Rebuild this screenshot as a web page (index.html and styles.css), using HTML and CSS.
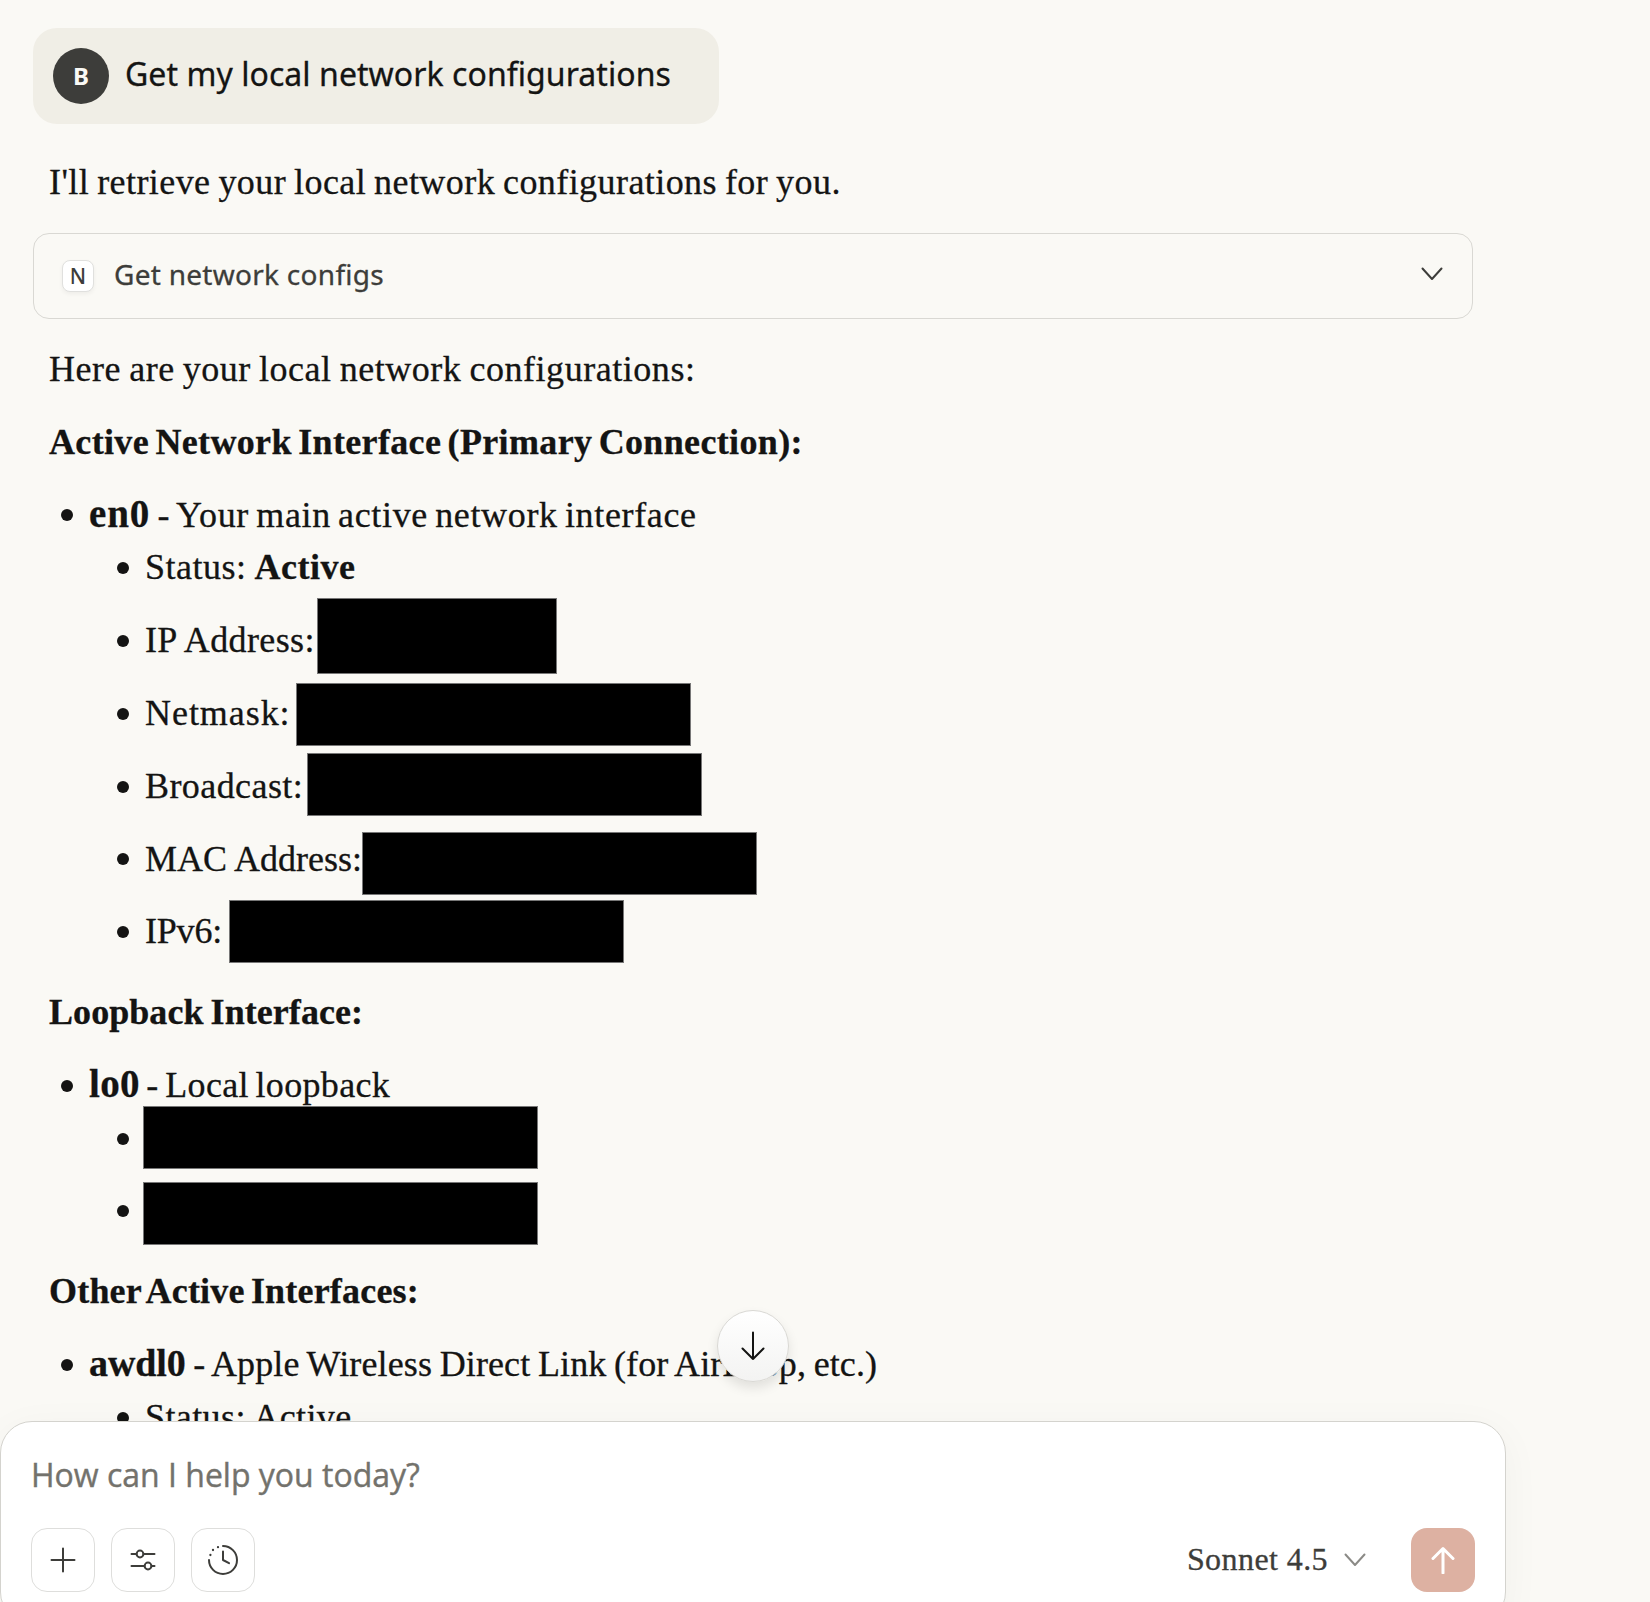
FILE: index.html
```html
<!DOCTYPE html>
<html lang="en">
<head>
<meta charset="utf-8">
<title>Local network configurations</title>
<link rel="stylesheet" href="styles.css">
</head>
<body>
<main class="chat">
  <div class="prompt">
    <span class="avatar">B</span>
    <span class="prompt-text">Get my local network configurations</span>
  </div>
  <p class="line intro"><span class="t-intro">I'll retrieve your local network configurations for you.</span></p>
  <div class="tool">
    <span class="tool-badge"><span>N</span></span>
    <span class="tool-name">Get network configs</span>
    <svg class="tool-chevron" width="22" height="14" viewBox="0 0 22 14"><path d="M1.500 1.500 11 12l9.500-10.500"/></svg>
  </div>
  <div class="answer">
    <p class="line"><span class="t-here">Here are your local network configurations:</span></p>
    <h3 class="line"><span class="t-active">Active Network Interface (Primary Connection):</span></h3>
    <ul class="list">
      <li class="item"><b class="t-en">en0</b><span class="t-main"> - Your main active network interface</span>
        <ul class="sublist">
          <li class="item"><span class="t-status">Status: </span><b class="t-on">Active</b></li>
          <li class="item"><span class="t-ip">IP Address:</span><i class="redact r-ip"></i></li>
          <li class="item"><span class="t-mask">Netmask:</span><i class="redact r-mask"></i></li>
          <li class="item"><span class="t-cast">Broadcast:</span><i class="redact r-cast"></i></li>
          <li class="item"><span class="t-mac">MAC Address:</span><i class="redact r-mac"></i></li>
          <li class="item"><span class="t-six">IPv6:</span><i class="redact r-six"></i></li>
        </ul>
      </li>
    </ul>
    <h3 class="line"><span class="t-loop">Loopback Interface:</span></h3>
    <ul class="list">
      <li class="item"><b class="t-lo">lo0</b><span class="t-local"> - Local loopback</span>
        <ul class="sublist">
          <li class="item">&nbsp;<i class="redact r-lo1"></i></li>
          <li class="item">&nbsp;<i class="redact r-lo2"></i></li>
        </ul>
      </li>
    </ul>
    <h3 class="line"><span class="t-other">Other Active Interfaces:</span></h3>
    <ul class="list">
      <li class="item"><b class="t-awdl">awdl0</b><span class="t-apple"> - Apple Wireless Direct Link (for AirDrop, etc.)</span>
        <ul class="sublist">
          <li class="item"><span class="t-status2">Status: Active</span></li>
        </ul>
      </li>
    </ul>
  </div>
</main>
<button class="scroll-down" aria-label="Scroll to bottom">
  <svg width="24" height="30" viewBox="0 0 24 30"><path d="M12 1.500V28M1.500 17.500 12 28l10.500-10.500"/></svg>
</button>
<section class="composer">
  <div class="placeholder">How can I help you today?</div>
  <div class="toolbar">
    <button class="icon-btn" aria-label="Add"><svg width="32" height="32" viewBox="0 0 32 32"><path d="M16 4.500v23M4.500 16h23"/></svg></button>
    <button class="icon-btn" aria-label="Settings"><svg width="32" height="32" viewBox="0 0 32 32"><path d="M4.500 10H9.500M16.500 10H27.500M4.500 22H17.500M24.500 22H27.500"/><circle cx="13" cy="10" r="3.400"/><circle cx="21" cy="22" r="3.400"/></svg></button>
    <button class="icon-btn" aria-label="History"><svg width="32" height="32" viewBox="0 0 32 32"><path d="M16 2A14 14 0 1 1 2 16"/><path d="M16 7.500V16l6 3.200"/><g class="dots"><circle cx="3.400" cy="11" r="1.150"/><circle cx="6" cy="6" r="1.150"/><circle cx="11" cy="3.200" r="1.150"/></g></svg></button>
    <span class="model">Sonnet 4.5</span>
    <svg class="model-chevron" width="22" height="14" viewBox="0 0 22 14"><path d="M1.500 1.500 11 12l9.500-10.500"/></svg>
    <button class="send" aria-label="Send"><svg width="24" height="28" viewBox="0 0 24 28"><path d="M12 27V3M2 12.500 12 2.500l10 10"/></svg></button>
  </div>
</section>
</body>
</html>
```

FILE: styles.css
```css
* { box-sizing: border-box; }
body {
  margin: 0;
  height: 1602px;
  position: relative;
  overflow: hidden;
  background: #faf9f5;
  color: #141413;
  font-family: "Noto Sans", sans-serif;
}
p, h3, ul { margin: 0; padding: 0; }
svg { display: block; fill: none; stroke: currentColor; stroke-width: 2; stroke-linecap: round; stroke-linejoin: round; }
button { padding: 0; font: inherit; color: inherit; display: flex; align-items: center; justify-content: center; }

.chat { padding: 28px 0 0 33px; width: 1473px; }
.prompt {
  width: 686px; height: 96px; padding-left: 20px;
  display: flex; align-items: center; gap: 16px;
  background: #f0eee6; border-radius: 24px;
}
.avatar {
  width: 56px; height: 56px; border-radius: 50%; padding-bottom: 2px;
  display: flex; align-items: center; justify-content: center;
  background: #3d3d3a; color: #faf9f5; font-size: 24px; font-weight: 700;
}
.prompt-text { font-size: 32px; line-height: 44px; padding-bottom: 4px; letter-spacing: .06px; white-space: nowrap; -webkit-text-stroke: .3px currentColor; }

.line, .item {
  font-family: "Liberation Serif", serif;
  font-size: 36px; line-height: 52.8px;
  white-space: nowrap;
  -webkit-text-stroke: .3px currentColor;
}
.line { padding-left: 16px; }
.intro { padding-top: 32px; height: 109px; }
.tool {
  height: 86px; padding: 0 29px 0 28px;
  display: flex; align-items: center;
  border: 1px solid #d9d8d3; border-radius: 16px;
  color: #3d3d3a; font-size: 28px;
}
.tool-badge {
  width: 32px; height: 32px; margin-right: 20px; padding-bottom: 1px;
  display: flex; align-items: center; justify-content: center;
  border: 1px solid #e0e0de; border-radius: 8px; background: #fff;
  box-shadow: 0 2px 4px rgba(0,0,0,.05); font-size: 21px; font-weight: 500;
}
.tool-name { padding-bottom: 4px; letter-spacing: .28px; white-space: nowrap; -webkit-text-stroke: .3px currentColor; }
.tool-chevron { margin-left: auto; margin-top: -5px; }

.answer { padding-top: 24px; }
h3.line { font-weight: 700; margin-top: 20px; }
.list, .sublist { list-style: none; }
.list { padding-left: 56px; margin-top: 20px; }
.sublist { padding-left: 56px; }
.list + h3.line { margin-top: 28px; }
.item { position: relative; }
.sublist .item + .item { margin-top: 20px; }
.item::before {
  content: ""; position: absolute; left: -28.500px; top: 20.800px;
  width: 12px; height: 12px; border-radius: 50%; background: #141413;
}
.item span { white-space: pre; }
.item b { line-height: 1; }

.t-intro { letter-spacing: .43px; word-spacing: -1.500px; }
.t-here { letter-spacing: .54px; word-spacing: -1.500px; }
.t-active { letter-spacing: .35px; word-spacing: -3px; }
.t-en { font-size: 39px; letter-spacing: .9px; }
.t-main { letter-spacing: .65px; word-spacing: -2.400px; }
.t-status { letter-spacing: .5px; word-spacing: -1.500px; }
.t-on { letter-spacing: .5px; }
.t-ip { letter-spacing: .38px; }
.t-mask { letter-spacing: .95px; }
.t-cast { letter-spacing: .42px; }
.t-six { letter-spacing: -.2px; }
.t-loop { letter-spacing: .06px; word-spacing: -2px; }
.t-other { letter-spacing: .2px; word-spacing: -3px; }
.t-lo { font-size: 39px; letter-spacing: .3px; }
.t-local { letter-spacing: .35px; word-spacing: -2.800px; }
.t-awdl { font-size: 38px; letter-spacing: -.1px; }
.t-apple { letter-spacing: .12px; word-spacing: -1.500px; }
.t-status2 { letter-spacing: .4px; }

.redact { position: absolute; width: 395px; height: 63px; background: #000; border: 1px solid #777; }
.r-ip { left: 172px; top: -16px; width: 240px; height: 76px; }
.r-mask { left: 151px; top: -4px; }
.r-cast { left: 162px; top: -7px; }
.r-mac { left: 217px; top: -1px; }
.r-six { left: 84px; top: -5px; }
.r-lo1 { left: -2px; top: -6px; }
.r-lo2 { left: -2px; top: -3px; }

.scroll-down {
  position: absolute; left: 717px; top: 1310px; width: 72px; height: 72px;
  border: 1px solid #d9d8d4; border-radius: 50%;
  background: linear-gradient(#fff, #f3f3f2);
  box-shadow: 0 6px 12px rgba(0,0,0,.1);
}
.composer {
  position: absolute; left: 0; top: 1421px; width: 1506px; height: 203px;
  padding: 35px 30px 0; border: 1px solid #d4d3ce; border-radius: 32px;
  background: #fff; box-shadow: 0 8px 40px rgba(0,0,0,.04);
}
.placeholder { height: 71px; font-family: "Open Sans", sans-serif; font-size: 32px; line-height: 36px; color: #73726c; white-space: nowrap; -webkit-text-stroke: .4px currentColor; }
.toolbar { display: flex; align-items: center; gap: 16px; color: #3d3d3a; }
.icon-btn { width: 64px; height: 64px; border: 1px solid #dededc; border-radius: 16px; background: #fff; }
.dots circle { fill: currentColor; stroke: none; }
.model { margin-left: auto; padding-bottom: 1px; font-family: "Liberation Serif", serif; font-size: 32px; letter-spacing: .42px; white-space: nowrap; -webkit-text-stroke: .3px currentColor; }
.model-chevron { color: #8b8a86; margin-right: 29px; }
.send { width: 64px; height: 64px; border: 0; border-radius: 16px; background: #ddb1a2; color: #fff; }
.send svg { stroke-width: 3; }
```
